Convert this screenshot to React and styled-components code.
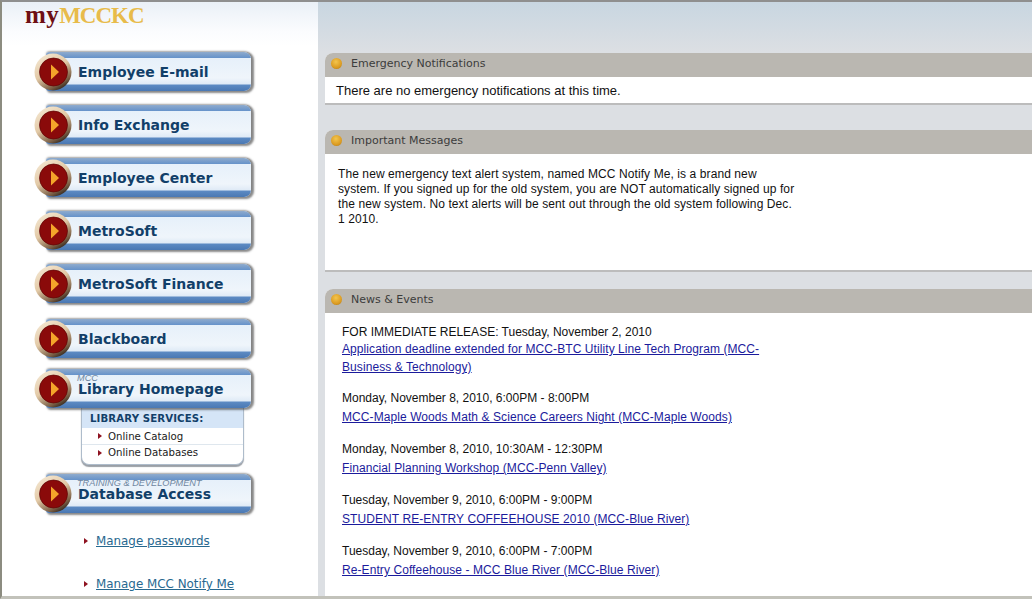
import React from "react";
import styled, { createGlobalStyle } from "styled-components";

const GlobalStyle = createGlobalStyle`
  html, body {
    margin: 0;
    padding: 0;
    background: #fff;
    overflow: hidden;
  }
  * { box-sizing: border-box; }
`;

const Page = styled.div`
  width: 1032px;
  height: 599px;
  display: flex;
  overflow: hidden;
  background: #e4e4e0;
  border-top: 2px solid #8f8f8f;
  border-left: 2px solid #8c8c80;
  border-bottom: 3px solid #c2c2ba;
  font-family: "Liberation Sans", Arial, sans-serif;
`;

const Sidebar = styled.aside`
  width: 316px;
  flex: none;
  display: flex;
  flex-direction: column;
  background: linear-gradient(to bottom, #eaf0f7 0, #fbfcfe 30px, #fff 44px);
`;

const Logo = styled.div`
  height: 48px;
  padding-left: 23px;
  font-family: "Liberation Serif", "Times New Roman", serif;
  font-weight: bold;
  font-size: 23px;
  line-height: 26px;
  letter-spacing: -1px;
  color: #e8bb4a;
  span {
    color: #6e0f14;
    font-size: 25px;
    letter-spacing: 0.4px;
  }
`;

const Nav = styled.nav`
  display: flex;
  flex-direction: column;
  padding-left: 32px;
`;

const ButtonRow = styled.a`
  position: relative;
  display: flex;
  align-items: center;
  width: 220px;
  height: 44px;
  margin-bottom: ${(p) => p.$gap ?? 9}px;
`;

const Bar = styled.div`
  position: absolute;
  inset: 2px 3px 3px 12px;
  border-radius: 3px 7px 7px 3px;
  background: linear-gradient(
    to bottom,
    #8fabcd 0,
    #6592ca 6px,
    #e6f0fa 6px,
    #eff5fb 26px,
    #dfeaf6 32px,
    #5c8ac3 33px,
    #4a78b3 100%
  );
  box-shadow: 2px 1px 2px 1px rgba(60, 60, 60, 0.6), 0 -1px 2px rgba(120, 120, 120, 0.45);
`;

const Disc = styled.svg`
  position: relative;
  flex: none;
  width: 40px;
  height: 40px;
`;

const Label = styled.div`
  position: relative;
  margin-left: 4px;
  font-family: "DejaVu Sans", Verdana, sans-serif;
  font-weight: bold;
  font-size: 14px;
  line-height: 12px;
  color: #123f69;
  white-space: nowrap;
`;

const Caption = styled.i`
  position: absolute;
  left: -1px;
  top: -9px;
  font-family: "Liberation Sans", Arial, sans-serif;
  font-weight: normal;
  font-size: 9.2px;
  line-height: 8px;
  color: #6f86a0;
`;

const Services = styled.div`
  width: 163px;
  height: 58px;
  margin: -4px 0 7px 47px;
  background: #fff;
  border: 1px solid #aebccb;
  border-top: none;
  border-radius: 0 0 8px 8px;
  box-shadow: 0 2px 1px #9a9fa6;
  font-family: "DejaVu Sans", Verdana, sans-serif;
  font-size: 10.2px;
  color: #1a1a1a;
`;

const ServicesTitle = styled.div`
  height: 21px;
  padding: 5px 0 0 8px;
  background: #d5e5f7;
  font-weight: bold;
  font-size: 10.2px;
  line-height: 13px;
  letter-spacing: 0.1px;
  color: #123f69;
`;

const ServiceRow = styled.div`
  display: flex;
  align-items: center;
  gap: 6px;
  height: 16px;
  padding-left: 16px;
  & + & { border-top: 1px solid #dfe7ee; }
`;

const Tri = styled.span`
  width: 0;
  height: 0;
  flex: none;
  border-left: 4px solid #8e1220;
  border-top: 3px solid transparent;
  border-bottom: 3px solid transparent;
`;

const ManageList = styled.div`
  display: flex;
  flex-direction: column;
  gap: 27px;
  padding: 17px 0 0 82px;
`;

const ManageRow = styled.div`
  display: flex;
  align-items: center;
  gap: 8px;
  height: 16px;
  font-family: "DejaVu Sans", Verdana, sans-serif;
  font-size: 11.9px;
  color: #27688f;
  text-decoration: underline;
`;

const Main = styled.main`
  flex: 1;
  min-width: 0;
  display: flex;
  flex-direction: column;
  padding: 51px 0 0 7px;
  background: linear-gradient(to bottom, #c8d6e1 0, #dcdfe3 50px, #dcdfe3 100%);
`;

const Panel = styled.section`
  flex: ${(p) => (p.$fill ? 1 : "none")};
  margin-bottom: ${(p) => p.$gap ?? 0}px;
  display: flex;
  flex-direction: column;
  background: #fff;
  border-bottom: ${(p) => (p.$fill ? "none" : "2px solid #bcbcbc")};
  border-radius: 8px 0 0 0;
  overflow: hidden;
`;

const PanelHead = styled.h2`
  flex: none;
  display: flex;
  align-items: center;
  gap: 9px;
  height: 24px;
  margin: 0;
  padding: 0 0 3px 6px;
  background: #bab7b1;
  font-family: "DejaVu Sans", Verdana, sans-serif;
  font-weight: normal;
  font-size: 11px;
  color: #3c3c3c;
`;

const Dot = styled.span`
  width: 11px;
  height: 11px;
  flex: none;
  border-radius: 50%;
  background: radial-gradient(circle at 45% 35%, #f3c54e 0, #dc9c22 60%, #a8741a 100%);
`;

const Body = styled.div`
  padding: ${(p) => p.$pad};
  height: ${(p) => p.$height}px;
  font-size: ${(p) => p.$size ?? 12}px;
  letter-spacing: ${(p) => p.$spacing ?? 0}px;
  line-height: 15px;
  color: #111;
`;

const News = styled.div`
  width: 430px;
  margin-bottom: ${(p) => (p.$tight ? 13 : 14)}px;
`;

const NewsDate = styled.div`
  line-height: ${(p) => (p.$tight ? 15 : 19)}px;
`;

const NewsLink = styled.a`
  display: block;
  line-height: 18px;
  letter-spacing: 0.08px;
  color: #1b1b9c;
  text-decoration: underline;
`;

// ring, red centre and arrow of each nav button
const ButtonDisc = () => (
  <Disc viewBox="0 0 40 40">
    <defs>
      <linearGradient id="ring" x1="0.1" y1="0" x2="0.7" y2="1">
        <stop offset="0" stopColor="#f6ead6" />
        <stop offset="0.5" stopColor="#e2c9a6" />
        <stop offset="0.85" stopColor="#7a5f45" />
        <stop offset="1" stopColor="#2e241c" />
      </linearGradient>
    </defs>
    <circle cx="19" cy="20" r="18.5" fill="url(#ring)" />
    <circle cx="19.5" cy="20" r="14" fill="#8a0a0a" stroke="#5e0606" strokeWidth="0.7" />
    <path d="M17 12.5 L25 20 L17 27.5 Z" fill="#f4a52a" />
  </Disc>
);

const NavButton = ({ title, caption, gap }) => (
  <ButtonRow $gap={gap}>
    <Bar />
    <ButtonDisc />
    <Label>
      {caption && <Caption>{caption}</Caption>}
      {title}
    </Label>
  </ButtonRow>
);

const newsItems = [
  {
    date: "FOR IMMEDIATE RELEASE: Tuesday, November 2, 2010",
    link: "Application deadline extended for MCC-BTC Utility Line Tech Program (MCC-Business & Technology)",
    tight: true,
  },
  {
    date: "Monday, November 8, 2010, 6:00PM - 8:00PM",
    link: "MCC-Maple Woods Math & Science Careers Night (MCC-Maple Woods)",
  },
  {
    date: "Monday, November 8, 2010, 10:30AM - 12:30PM",
    link: "Financial Planning Workshop (MCC-Penn Valley)",
  },
  {
    date: "Tuesday, November 9, 2010, 6:00PM - 9:00PM",
    link: "STUDENT RE-ENTRY COFFEEHOUSE 2010 (MCC-Blue River)",
  },
  {
    date: "Tuesday, November 9, 2010, 6:00PM - 7:00PM",
    link: "Re-Entry Coffeehouse - MCC Blue River (MCC-Blue River)",
  },
];

export default function App() {
  return (
    <>
      <GlobalStyle />
      <Page>
        <Sidebar>
          <Logo>
            <span>my</span>MCCKC
          </Logo>
          <Nav>
            <NavButton title="Employee E-mail" />
            <NavButton title="Info Exchange" />
            <NavButton title="Employee Center" />
            <NavButton title="MetroSoft" />
            <NavButton title="MetroSoft Finance" gap={11} />
            <NavButton title="Blackboard" gap={6} />
            <NavButton title="Library Homepage" caption="MCC" gap={0} />
            <Services>
              <ServicesTitle>LIBRARY SERVICES:</ServicesTitle>
              <ServiceRow>
                <Tri />
                Online Catalog
              </ServiceRow>
              <ServiceRow>
                <Tri />
                Online Databases
              </ServiceRow>
            </Services>
            <NavButton title="Database Access" caption="TRAINING & DEVELOPMENT" gap={0} />
          </Nav>
          <ManageList>
            <ManageRow>
              <Tri />
              Manage passwords
            </ManageRow>
            <ManageRow>
              <Tri />
              Manage MCC Notify Me
            </ManageRow>
          </ManageList>
        </Sidebar>
        <Main>
          <Panel $gap={25}>
            <PanelHead>
              <Dot />
              Emergency Notifications
            </PanelHead>
            <Body $pad="6px 0 0 11px" $height={26} $size={13}>
              There are no emergency notifications at this time.
            </Body>
          </Panel>
          <Panel $gap={17}>
            <PanelHead>
              <Dot />
              Important Messages
            </PanelHead>
            <Body $pad="13px 0 0 13px" $height={116} $spacing={0.09}>
              The new emergency text alert system, named MCC Notify Me, is a brand new
              <br />
              system. If you signed up for the old system, you are NOT automatically signed up for
              <br />
              the new system. No text alerts will be sent out through the old system following Dec.
              <br />
              1 2010.
            </Body>
          </Panel>
          <Panel $fill>
            <PanelHead>
              <Dot />
              News &amp; Events
            </PanelHead>
            <Body $pad="12px 0 0 17px">
              {newsItems.map((item) => (
                <News key={item.link} $tight={item.tight}>
                  <NewsDate $tight={item.tight}>{item.date}</NewsDate>
                  <NewsLink>{item.link}</NewsLink>
                </News>
              ))}
            </Body>
          </Panel>
        </Main>
      </Page>
    </>
  );
}
